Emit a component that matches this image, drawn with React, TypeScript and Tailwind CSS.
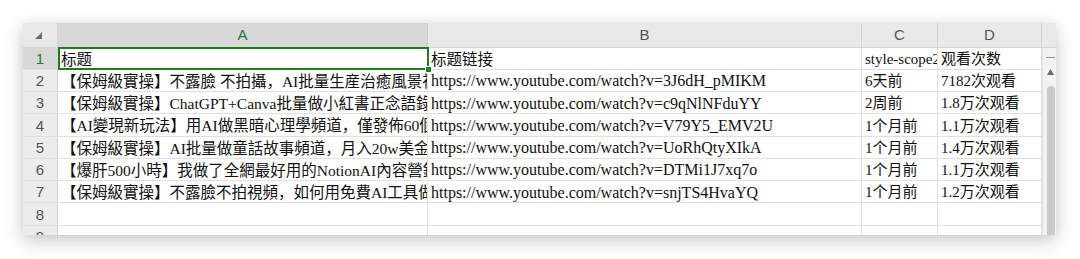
import React from "react";

const rows: { n: number; a: string; b: string; c: string; d: string }[] = [
  { n: 1, a: "标题", b: "标题链接", c: "style-scope2", d: "观看次数" },
  { n: 2, a: "【保姆級實操】不露臉 不拍攝，AI批量生産治癒風景視頻", b: "https://www.youtube.com/watch?v=3J6dH_pMIKM", c: "6天前", d: "7182次观看" },
  { n: 3, a: "【保姆級實操】ChatGPT+Canva批量做小紅書正念語錄", b: "https://www.youtube.com/watch?v=c9qNlNFduYY", c: "2周前", d: "1.8万次观看" },
  { n: 4, a: "【AI變現新玩法】用AI做黑暗心理學頻道，僅發佈60個視頻", b: "https://www.youtube.com/watch?v=V79Y5_EMV2U", c: "1个月前", d: "1.1万次观看" },
  { n: 5, a: "【保姆級實操】AI批量做童話故事頻道，月入20w美金", b: "https://www.youtube.com/watch?v=UoRhQtyXIkA", c: "1个月前", d: "1.4万次观看" },
  { n: 6, a: "【爆肝500小時】我做了全網最好用的NotionAI內容營銷系統", b: "https://www.youtube.com/watch?v=DTMi1J7xq7o", c: "1个月前", d: "1.1万次观看" },
  { n: 7, a: "【保姆級實操】不露臉不拍視頻，如何用免費AI工具做視頻", b: "https://www.youtube.com/watch?v=snjTS4HvaYQ", c: "1个月前", d: "1.2万次观看" },
  { n: 8, a: "", b: "", c: "", d: "" },
  { n: 9, a: "", b: "", c: "", d: "" },
];

const serif = "font-['Liberation_Serif','Noto_Sans_CJK_SC',serif]";
const sans = "font-['Liberation_Sans','Noto_Sans',sans-serif]";

function Cell({ w, text, cls = "" }: { w: string; text: string; cls?: string }) {
  return (
    <div
      className={`${w} shrink-0 h-full border-r border-[#e0e0e0] overflow-hidden whitespace-nowrap flex items-center pl-[3px] pt-[2px] text-[#111] ${serif} ${cls}`}
    >
      {text}
    </div>
  );
}

export default function App() {
  return (
    <div className="w-[1080px] h-[259px] bg-white pl-[23px] pt-[23px]">
      <div className="w-[1033px] h-[212px] overflow-hidden bg-white flex flex-col shadow-[0_6px_18px_rgba(0,0,0,0.2),0_0_10px_rgba(0,0,0,0.06)]">
        {/* header row */}
        <div className={`flex h-[24.5px] shrink-0 bg-[#e9e9e9] border-b border-[#d4d4d4] text-[15px] text-[#555] ${sans}`}>
          <div className="w-[35px] shrink-0 h-full border-r border-[#d4d4d4] relative">
            <svg className="absolute left-[12px] top-[9px]" width="7" height="7" viewBox="0 0 7 7">
              <polygon points="7,0 7,7 0,7" fill="#6e6e6e" />
            </svg>
          </div>
          <div className="w-[370px] shrink-0 h-full bg-[#d8d8d8] border-r border-[#cfcfcf] flex items-center justify-center pt-[1px] text-[#1e7b34]">A</div>
          <div className="w-[434px] shrink-0 h-full border-r border-[#d4d4d4] flex items-center justify-center pt-[1px]">B</div>
          <div className="w-[76px] shrink-0 h-full border-r border-[#d4d4d4] flex items-center justify-center pt-[1px]">C</div>
          <div className="w-[104px] shrink-0 h-full border-r border-[#d4d4d4] flex items-center justify-center pt-[1px]">D</div>
          <div className="flex-1 h-full" />
        </div>
        {/* body */}
        <div className="flex flex-1 min-h-0">
          <div className="w-[1019px] shrink-0 flex flex-col">
            {rows.map((r) => (
              <div key={r.n} className="flex h-[22.25px] shrink-0 border-b border-[#e0e0e0]">
                <div
                  className={`w-[35px] shrink-0 h-full border-r border-[#d4d4d4] flex items-center justify-center pt-[2px] text-[15px] ${sans} ${
                    r.n === 1 ? "bg-[#d8d8d8] text-[#1e7b34]" : "bg-[#ececec] text-[#555]"
                  }`}
                >
                  {r.n}
                </div>
                {r.n === 1 ? (
                  <div className="w-[370px] shrink-0 h-full relative">
                    <div className={`w-full h-full border-r border-[#e0e0e0] overflow-hidden whitespace-nowrap flex items-center pl-[3px] pt-[2px] text-[15.5px] text-[#111] ${serif}`}>
                      {r.a}
                    </div>
                    <div className="absolute left-0 top-[-1px] right-[-1px] bottom-[-1px] border-2 border-[#1e7e1e]" />
                    <div className="absolute right-[-4px] bottom-[-4px] w-[7px] h-[7px] bg-[#1e7e1e] border border-white" />
                  </div>
                ) : (
                  <Cell w="w-[370px]" text={r.a} cls="text-[15.5px]" />
                )}
                <Cell w="w-[434px]" text={r.b} cls={r.n === 1 ? "text-[15.5px]" : "text-[16px]"} />
                <Cell w="w-[76px]" text={r.c} cls="text-[15px]" />
                <Cell w="w-[104px]" text={r.d} cls="text-[15px]" />
              </div>
            ))}
          </div>
          {/* scrollbar */}
          <div className="w-[14px] shrink-0 bg-[#f2f2f2] border-l border-[#e2e2e2] relative">
            <div className="absolute left-[3px] top-[9px] w-[9px] h-[1.5px] bg-[#9a9a9a]" />
            <svg className="absolute left-[4px] top-[21px]" width="7" height="6" viewBox="0 0 7 6">
              <polygon points="3.5,0 7,6 0,6" fill="#6a6a6a" />
            </svg>
            <div className="absolute left-[4px] right-[1px] top-[38px] bottom-0 bg-[#c9c9c9] rounded-t-[5px]" />
          </div>
        </div>
      </div>
    </div>
  );
}
